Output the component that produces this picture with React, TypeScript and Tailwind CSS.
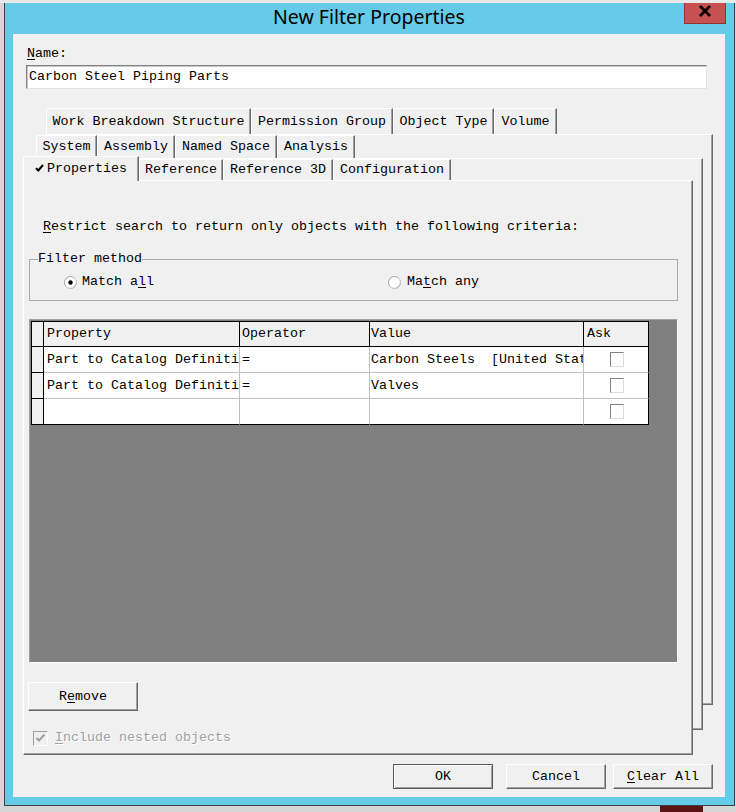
import React from 'react';

// Win32-style "New Filter Properties" dialog with stacked tab pages

const mono = "font-['Liberation_Mono','DejaVu_Sans_Mono',monospace] text-[13.33px] leading-[16px] text-black";

const raised =
  'border border-t-white border-l-white border-r-[#696969] border-b-[#696969] shadow-[inset_-1px_-1px_0_#a0a0a0]';

function Key({ text, at }: { text: string; at: number }) {
  return (
    <>
      {text.slice(0, at)}
      <span className="underline underline-offset-[2px]">{text[at]}</span>
      {text.slice(at + 1)}
    </>
  );
}

type TabDef = { label: string; cls: string; selected?: boolean };

const row1: TabDef[] = [
  { label: 'Work Breakdown Structure', cls: 'w-[205px]' },
  { label: 'Permission Group', cls: 'w-[142px]' },
  { label: 'Object Type', cls: 'w-[101px]' },
  { label: 'Volume', cls: 'w-[63px]' },
];

const row2: TabDef[] = [
  { label: 'System', cls: 'w-[61px]' },
  { label: 'Assembly', cls: 'w-[78px]' },
  { label: 'Named Space', cls: 'w-[102px]' },
  { label: 'Analysis', cls: 'w-[78px]' },
];

const row3: TabDef[] = [
  { label: 'Properties', cls: 'w-[116px]', selected: true },
  { label: 'Reference', cls: 'w-[84px]' },
  { label: 'Reference 3D', cls: 'w-[110px]' },
  { label: 'Configuration', cls: 'w-[118px]' },
];

function Tab({ tab }: { tab: TabDef }) {
  const size = tab.selected ? 'h-[25px] -mb-px relative z-10' : 'h-full';
  return (
    <div
      className={`${tab.cls} ${size} shrink-0 flex items-center justify-center gap-[3px] bg-[#f0f0f0] whitespace-nowrap rounded-tl-[2px] border-t border-l border-r border-t-white border-l-white border-r-[#696969] shadow-[inset_-1px_0_0_#a0a0a0]`}
    >
      {tab.selected && (
        <svg width="9" height="8" viewBox="0 0 9 8" className="mb-[3px]">
          <path d="M1 4.2 L3.3 6.5 L8 1" fill="none" stroke="#000" strokeWidth="2" />
        </svg>
      )}
      <span>{tab.label}</span>
    </div>
  );
}

function Radio({ checked }: { checked?: boolean }) {
  return (
    <svg width="13" height="13" viewBox="0 0 13 13" className="shrink-0">
      <circle cx="6.5" cy="6.5" r="6" fill="#fff" stroke="#a0a0a0" />
      <path d="M2.3 10.7 A6 6 0 0 0 10.7 2.3" fill="none" stroke="#e3e3e3" />
      {checked && <circle cx="6.5" cy="6.5" r="2.2" fill="#000" />}
    </svg>
  );
}

function AskBox() {
  return (
    <div className="w-[14px] h-[15px] bg-white border border-t-[#808080] border-l-[#808080] border-r-[#dcdcdc] border-b-[#dcdcdc]" />
  );
}

const columns = ['Property', 'Operator', 'Value', 'Ask'];
// left inset of the text in each column
const inset = ['pl-[3px]', 'pl-[2px]', 'pl-[1px]', 'pl-[3px]'];

const rows: string[][] = [
  ['Part to Catalog Definition', '=', 'Carbon Steels  [United States]'],
  ['Part to Catalog Definition', '=', 'Valves'],
  ['', '', ''],
];

function CriteriaGrid() {
  return (
    <div className="grid grid-cols-[12px_196px_130px_214px_65px] border-l border-t border-black w-[618px]">
      <div className="h-[25px] bg-[#f0f0f0] border-r border-b border-black" />
      {columns.map((c, j) => (
        <div
          key={c}
          className={`h-[25px] bg-[#f0f0f0] border-r border-b border-black flex items-center ${inset[j]}`}
        >
          {c}
        </div>
      ))}
      {rows.map((r, i) => {
        const last = i === rows.length - 1;
        const bottom = last ? 'border-b-black' : 'border-b-[#c0c0c0]';
        return (
          <React.Fragment key={i}>
            <div className="h-[26px] bg-[#f0f0f0] border-r border-b border-black" />
            {r.map((cell, j) => (
              <div
                key={j}
                className={`h-[26px] bg-white border-r border-b border-r-[#c0c0c0] ${bottom} flex items-center ${inset[j]} overflow-hidden whitespace-pre`}
              >
                {cell}
              </div>
            ))}
            <div className={`h-[26px] bg-white border-r border-b border-r-black ${bottom} flex items-center justify-center pl-px`}>
              <AskBox />
            </div>
          </React.Fragment>
        );
      })}
    </div>
  );
}

function Button({ children, isDefault, cls }: { children: React.ReactNode; isDefault?: boolean; cls: string }) {
  const edge = isDefault
    ? 'border border-[#5a5a5a] shadow-[inset_1px_1px_0_#fff,inset_-1px_-1px_0_#a0a0a0]'
    : raised;
  return (
    <div className={`${cls} ${edge} bg-[#f0f0f0] flex items-center justify-center`}>{children}</div>
  );
}

function PropertiesPage() {
  return (
    <div className={`${raised} bg-[#f0f0f0] h-[575px] pl-[5px]`}>
      <p className="mt-[38px] ml-[14px]">
        <Key text="Restrict search to return only objects with the following criteria:" at={0} />
      </p>

      <fieldset className="mt-[16px] w-[649px] border border-[#a9a9a9] pt-[7px] pb-[10px]">
        <legend className="ml-[8px] px-0">Filter method</legend>
        <div className="flex items-center">
          <div className="ml-[34px] w-[324px] flex items-center gap-[5px]">
            <Radio checked />
            <span>
              <Key text="Match all" at={7} />
            </span>
          </div>
          <div className="flex items-center gap-[6px]">
            <Radio />
            <span>
              <Key text="Match any" at={2} />
            </span>
          </div>
        </div>
      </fieldset>

      <div className="mt-[18px] w-[649px] h-[344px] bg-[#808080] border border-t-[#a0a0a0] border-l-[#a0a0a0] border-r-white border-b-white p-px">
        <CriteriaGrid />
      </div>

      <Button cls="mt-[19px] -ml-px w-[110px] h-[29px]">
        <Key text="Remove" at={1} />
      </Button>

      <div className="mt-[19px] ml-[4px] flex items-center gap-[7px]">
        <div className="w-[15px] h-[15px] bg-[#f0f0f0] border border-t-[#a0a0a0] border-l-[#a0a0a0] border-r-white border-b-white flex items-center justify-center">
          <svg width="11" height="10" viewBox="0 0 11 10">
            <path d="M1.5 5 L4 7.5 L9.5 1.5" fill="none" stroke="#a0a0a0" strokeWidth="2" />
          </svg>
        </div>
        <span className="text-[#a0a0a0] [text-shadow:1px_1px_0_#fff]">
          <Key text="Include nested objects" at={0} />
        </span>
      </div>
    </div>
  );
}

export default function App() {
  return (
    <div className="w-[736px] h-[812px] bg-[#d6d6d6] overflow-hidden">
      <div className="h-[3px] bg-[#e9e9e9]" />
      <div className="ml-[4px] w-[731px] bg-[#66cbe9] border-l border-r border-b border-[#3f3f3f] pl-[8px] pr-[9px] pb-[8px]">
        {/* title bar */}
        <div className="relative h-[31px] flex items-center justify-center pb-[4px]">
          <span className="font-['Noto_Sans',sans-serif] text-[19.5px] text-black leading-none">New Filter Properties</span>
          <div className="absolute -right-[1px] top-0 w-[42px] h-[21px] bg-[#c75050] border border-t-0 border-[#8d3434] flex justify-center pt-[2px]">
            <svg width="14" height="12" viewBox="0 0 14 12">
              <path d="M2 1 L12 11 M12 1 L2 11" stroke="#000" strokeWidth="2.8" />
            </svg>
          </div>
        </div>

        {/* client area */}
        <div className={`${mono} h-[763px] bg-[#f0f0f0] pl-[13px] pt-[12px]`}>
          <div className="ml-px">
            <Key text="Name:" at={0} />
          </div>
          <div className="mt-[3px] w-[681px] h-[24px] bg-white border border-t-[#828282] border-l-[#828282] border-r-[#e3e3e3] border-b-[#e3e3e3] shadow-[inset_1px_1px_0_#c8c8c8] flex items-center pl-[2px]">
            Carbon Steel Piping Parts
          </div>

          {/* stacked tab pages, each row sits on its own page */}
          <div className="mt-[19px] ml-[20px] w-[667px]">
            <div className="flex h-[26px]">
              {row1.map((t) => (
                <Tab key={t.label} tab={t} />
              ))}
            </div>
            <div className={`${raised} bg-[#f0f0f0]`}>
              <div className="-ml-[11px] mr-[9px] -mb-[26px]">
                <div className="flex h-[23px]">
                  {row2.map((t) => (
                    <Tab key={t.label} tab={t} />
                  ))}
                </div>
                <div className={`${raised} bg-[#f0f0f0]`}>
                  <div className="-ml-[14px] mr-[9px] -mb-[26px]">
                    <div className="flex items-end h-[21px]">
                      {row3.map((t) => (
                        <Tab key={t.label} tab={t} />
                      ))}
                    </div>
                    <PropertiesPage />
                  </div>
                </div>
              </div>
            </div>
          </div>

          <div className="mt-[59px] flex pr-[12px] justify-end">
            <Button isDefault cls="w-[100px] h-[25px] mr-[13px]">OK</Button>
            <Button cls="w-[100px] h-[25px] mr-[7px]">Cancel</Button>
            <Button cls="w-[100px] h-[25px]">
              <Key text="Clear All" at={0} />
            </Button>
          </div>
        </div>
      </div>
      <div className="flex h-[6px]">
        <div className="ml-[660px] w-[43px] bg-[#5a1414]" />
      </div>
    </div>
  );
}
